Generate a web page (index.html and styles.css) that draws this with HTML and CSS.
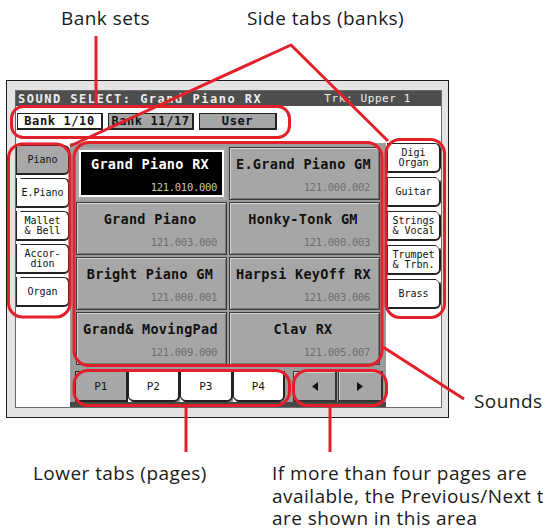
FILE: index.html
```html
<!DOCTYPE html>
<html>
<head>
<meta charset="utf-8">
<link rel="stylesheet" href="styles.css">
</head>
<body>
<div class="page">
  <div class="frame">
    <div class="screen">
      <div class="titlebar"><span class="ttl">SOUND SELECT: Grand Piano RX</span><span class="trk">Trk: Upper 1</span></div>
      <div class="bankrow">
        <div class="btab on">Bank 1/10</div>
        <div class="btab">Bank 11/17</div>
        <div class="btab user">User</div>
      </div>
      <div class="main">
        <div class="side left">
          <div class="stab on">Piano</div>
          <div class="stab">E.Piano</div>
          <div class="stab">Mallet<br>&amp; Bell</div>
          <div class="stab">Accor-<br>dion</div>
          <div class="stab">Organ</div>
        </div>
        <div class="center">
          <div class="grid">
            <div class="snd sel"><span class="nm">Grand Piano RX</span><span class="num">121.010.000</span></div>
            <div class="snd"><span class="nm">E.Grand Piano GM</span><span class="num">121.000.002</span></div>
            <div class="snd"><span class="nm">Grand Piano</span><span class="num">121.003.000</span></div>
            <div class="snd"><span class="nm">Honky-Tonk GM</span><span class="num">121.000.003</span></div>
            <div class="snd"><span class="nm">Bright Piano GM</span><span class="num">121.000.001</span></div>
            <div class="snd"><span class="nm">Harpsi KeyOff RX</span><span class="num">121.003.006</span></div>
            <div class="snd"><span class="nm">Grand&amp; MovingPad</span><span class="num">121.009.000</span></div>
            <div class="snd"><span class="nm">Clav RX</span><span class="num">121.005.007</span></div>
          </div>
          <div class="lower">
            <div class="ptab on">P1</div>
            <div class="ptab">P2</div>
            <div class="ptab">P3</div>
            <div class="ptab">P4</div>
            <div class="nav prev"><svg width="6" height="9" viewBox="0 0 6 9"><polygon points="6,0 6,9 0,4.5" fill="#111"/></svg></div>
            <div class="nav next"><svg width="6" height="9" viewBox="0 0 6 9"><polygon points="0,0 0,9 6,4.5" fill="#111"/></svg></div>
          </div>
        </div>
        <div class="side right">
          <div class="stab">Digi<br>Organ</div>
          <div class="stab">Guitar</div>
          <div class="stab">Strings<br>&amp; Vocal</div>
          <div class="stab">Trumpet<br>&amp; Trbn.</div>
          <div class="stab">Brass</div>
        </div>
      </div>
    </div>
  </div>

  <div class="lbl l-bank">Bank sets</div>
  <div class="lbl l-side">Side tabs (banks)</div>
  <div class="lbl l-sounds">Sounds</div>
  <div class="lbl l-lower">Lower tabs (pages)</div>
  <div class="lbl l-more">
    <div class="ln">If more than four pages are</div>
    <div class="ln">available, the Previous/Next tabs</div>
    <div class="ln">are shown in this area</div>
  </div>

  <svg class="marks" width="543" height="528" viewBox="0 0 543 528">
    <g fill="none" stroke="#e3202a" stroke-width="3" stroke-linejoin="round">
      <rect x="11.5" y="106.5" width="278" height="31" rx="12"/>
      <rect x="8.5" y="144" width="61.5" height="173" rx="14"/>
      <rect x="74" y="142.5" width="308" height="223" rx="15"/>
      <rect x="386" y="139.5" width="58.5" height="178" rx="14"/>
      <rect x="74" y="370.5" width="215.5" height="35" rx="14"/>
      <rect x="293.5" y="370.5" width="93" height="35" rx="14"/>
      <line x1="96" y1="36" x2="96" y2="106"/>
      <polyline points="70,146 291,45 388,141"/>
      <line x1="383" y1="347" x2="464" y2="399"/>
      <line x1="186" y1="407" x2="186" y2="452"/>
      <line x1="330" y1="407" x2="330" y2="452"/>
    </g>
  </svg>
</div>
</body>
</html>
```
FILE: styles.css
```css
* { box-sizing: border-box; margin: 0; padding: 0; }
html, body { width: 543px; height: 528px; background: #fff; overflow: hidden; }
body { font-family: "DejaVu Sans Mono", monospace; color: #111; }

.page { position: relative; width: 543px; height: 528px; padding: 80px 0 0 6px; overflow: hidden; }

.frame {
  width: 443px; height: 338px;
  border: 1px solid #1c1c1c;
  background: #e3e3e3;
  padding: 9px 6px 9px 8px;
}
.screen {
  height: 318px;
  display: flex; flex-direction: column;
  background: #fff;
  border: 1px solid #6a6a6a;
}
.titlebar {
  height: 15px; flex: none;
  background: #4e4e4e; color: #ededed;
  display: flex; align-items: center;
  padding: 0 30px 0 2px;
}
.ttl { font-weight: bold; font-size: 12px; letter-spacing: 1.5px; }
.trk { margin-left: auto; font-size: 11px; letter-spacing: 0.6px; }

.bankrow {
  height: 37px; flex: none;
  display: flex; gap: 5px; align-items: flex-start;
  padding: 7px 0 0 1px;
}
.btab {
  height: 17px; width: 86px;
  border: 1px solid #222; border-right-width: 2px; border-bottom-width: 2px;
  background: #a6a6a6;
  font-weight: bold; font-size: 12px; letter-spacing: 0.6px;
  display: flex; align-items: center; justify-content: center;
}
.btab.on { background: #fff; }
.btab.user { width: 78px; }

.main { flex: 1; display: flex; }
.side { width: 54px; display: flex; flex-direction: column; gap: 3px; }
.side.left { padding-top: 2px; }
.side.right { width: 55px; padding-left: 1px; gap: 4px; }
.stab {
  position: relative;
  height: 30px;
  border: 1px solid #222; border-right-width: 2px; border-bottom-width: 2px;
  border-radius: 0 6px 6px 0;
  background: #fff;
  font-size: 10px; line-height: 10px; text-align: center;
  display: flex; align-items: center; justify-content: center;
}
.stab.on { background: #a8a8a8; }
.side.left .stab + .stab::before {
  content: ""; position: absolute; left: 0; top: -1px;
  border-top: 4px solid #fff; border-right: 4px solid transparent;
}
.side.right .stab + .stab::before {
  content: ""; position: absolute; right: -1px; top: -1px;
  border-top: 4px solid #fff; border-left: 4px solid transparent;
}

.center {
  width: 316px;
  background: #9c9c9c;
  border-bottom: 5px solid #484848;
  padding: 4px 0 0 6px;
  display: flex; flex-direction: column;
}
.grid {
  display: grid;
  grid-template-columns: 151px 151px;
  grid-template-rows: repeat(4, 53px);
  gap: 2px;
}
.snd {
  border: 1px solid #3a3a3a;
  background: #a6a6a6;
  box-shadow: inset 1px 1px 0 #d6d6d6, inset -1px -1px 0 #777;
  display: flex; flex-direction: column;
  padding: 8px 9px 6px 6px;
}
.nm { font-weight: bold; font-size: 13.5px; line-height: 16px; letter-spacing: 0.3px; text-align: center; white-space: nowrap; }
.num { margin-top: auto; font-size: 10.5px; letter-spacing: -0.3px; color: #6d6d6d; text-align: right; }
.snd.sel {
  background: #000; color: #fff;
  border: 3px solid #a6a6a6;
  box-shadow: inset 0 0 0 2px #fff;
  padding: 6px 7px 4px 4px;
}
.snd.sel .num { color: #c4c4c4; }

.lower { display: flex; padding-top: 6px; margin-left: -1px; }
.ptab {
  position: relative;
  width: 52.5px; height: 31px;
  border: 1px solid #222; border-bottom-width: 2px; border-right-width: 2px;
  border-radius: 0 0 6px 6px;
  background: #fff;
  font-size: 11px;
  display: flex; align-items: center; justify-content: center;
}
.ptab.on { background: #a8a8a8; border-radius: 0; }
.ptab + .ptab::before {
  content: ""; position: absolute; left: -1px; bottom: -2px;
  border-bottom: 4px solid #fff; border-right: 4px solid transparent;
}
.nav {
  width: 44px; height: 31px;
  background: #a6a6a6;
  border: 1px solid #333; border-right-width: 2px; border-bottom-width: 2px;
  box-shadow: inset 1px 1px 0 #d0d0d0;
  display: flex; align-items: center; justify-content: center;
}
.nav.prev { margin-left: 8px; }
.nav.next { width: 45px; margin-left: 1px; }

.lbl {
  position: absolute;
  font-family: "Open Sans", sans-serif;
  font-size: 19px; line-height: 22.5px; letter-spacing: 0.45px;
  color: #1a1a1a; white-space: nowrap;
}
.ln { height: 22.5px; }
.l-bank { left: 61px; top: 7px; }
.l-side { left: 247px; top: 7px; }
.l-sounds { left: 474px; top: 390px; }
.l-lower { left: 33px; top: 462px; }
.l-more { left: 272px; top: 462px; }

.marks { position: absolute; left: 0; top: 0; pointer-events: none; }
```
